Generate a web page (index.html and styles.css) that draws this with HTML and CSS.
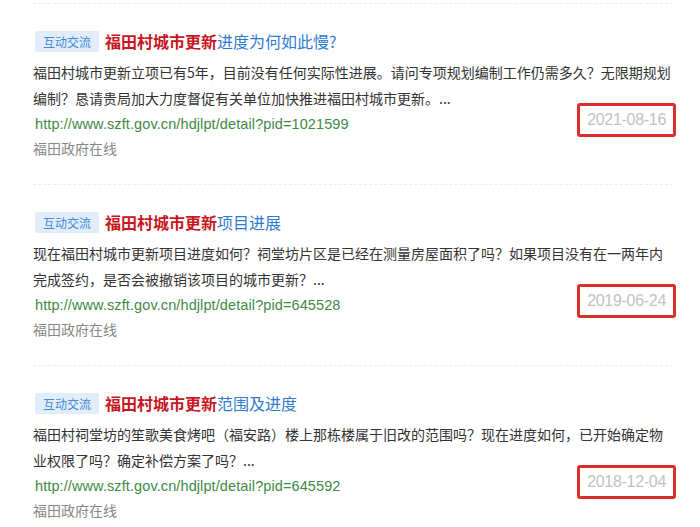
FILE: index.html
```html
<!DOCTYPE html>
<html lang="zh-CN">

<head>
    <meta charset="UTF-8">
    <meta name="viewport" content="width=device-width, initial-scale=1.0">
    <title>福田村城市更新</title>
    <link rel="stylesheet" href="styles.css">
</head>

<body>

    <div id="result-list">
        <div class="result">
            <div class="result-title">
                <span class="tag">互动交流</span>
                <span class="title-text"><em>福田村城市更新</em>进度为何如此慢?</span>
            </div>
            <p class="summary">福田村城市更新立项已有5年，目前没有任何实际性进展。请问专项规划编制工作仍需多久？无限期规划编制？恳请贵局加大力度督促有关单位加快推进福田村城市更新。...</p>
            <div class="link-row">
                <span class="url">http://www.szft.gov.cn/hdjlpt/detail?pid=1021599</span>
                <span class="date">2021-08-16</span>
            </div>
            <div class="source">福田政府在线</div>
        </div>

        <div class="result">
            <div class="result-title">
                <span class="tag">互动交流</span>
                <span class="title-text"><em>福田村城市更新</em>项目进展</span>
            </div>
            <p class="summary">现在福田村城市更新项目进度如何？祠堂坊片区是已经在测量房屋面积了吗？如果项目没有在一两年内完成签约，是否会被撤销该项目的城市更新？...</p>
            <div class="link-row">
                <span class="url">http://www.szft.gov.cn/hdjlpt/detail?pid=645528</span>
                <span class="date">2019-06-24</span>
            </div>
            <div class="source">福田政府在线</div>
        </div>

        <div class="result">
            <div class="result-title">
                <span class="tag">互动交流</span>
                <span class="title-text"><em>福田村城市更新</em>范围及进度</span>
            </div>
            <p class="summary">福田村祠堂坊的笙歌美食烤吧（福安路）楼上那栋楼属于旧改的范围吗？现在进度如何，已开始确定物业权限了吗？确定补偿方案了吗？...</p>
            <div class="link-row">
                <span class="url">http://www.szft.gov.cn/hdjlpt/detail?pid=645592</span>
                <span class="date">2018-12-04</span>
            </div>
            <div class="source">福田政府在线</div>
        </div>
    </div>

</body>

</html>
```

FILE: styles.css
```css
* {
    box-sizing: border-box;
    margin: 0;
    padding: 0;
}

body {
    font-family: "Noto Sans CJK SC", "Liberation Sans", sans-serif;
    background-color: #fff;
    color: #333;
    padding-top: 3px;
}

#result-list {
    margin-left: 33px;
    width: 640px;
}

.result {
    border-top: 1px dashed #ececec;
    padding: 27px 0 24px;
}

.result-title {
    display: flex;
    align-items: center;
    gap: 6px;
    height: 21px;
    margin-left: 2px;
}

.tag {
    background-color: #e1edf9;
    color: #3f8ad8;
    font-size: 12px;
    line-height: 21px;
    padding: 0 8px;
    border-radius: 2px;
}

.title-text {
    font-size: 16px;
    color: #2f7bd0;
    line-height: 21px;
}

.title-text em {
    font-style: normal;
    font-weight: bold;
    color: #c8161f;
}

.summary {
    margin-top: 7px;
    font-size: 14px;
    line-height: 26px;
    color: #333;
}

.link-row {
    display: flex;
    justify-content: space-between;
    align-items: center;
    height: 25px;
}

.url {
    font-family: "Liberation Sans", sans-serif;
    font-size: 14.5px;
    letter-spacing: 0.1px;
    color: #3e8a47;
    margin-left: 2px;
}

.date {
    font-family: "Liberation Sans", sans-serif;
    font-size: 16px;
    letter-spacing: -0.3px;
    color: #c2c2c2;
    border: 3px solid #d8302a;
    border-radius: 3px;
    padding: 5px 7px;
    margin: -7px -3px 0 0;
}

.source {
    font-size: 14px;
    line-height: 24px;
    color: #888;
}
```
